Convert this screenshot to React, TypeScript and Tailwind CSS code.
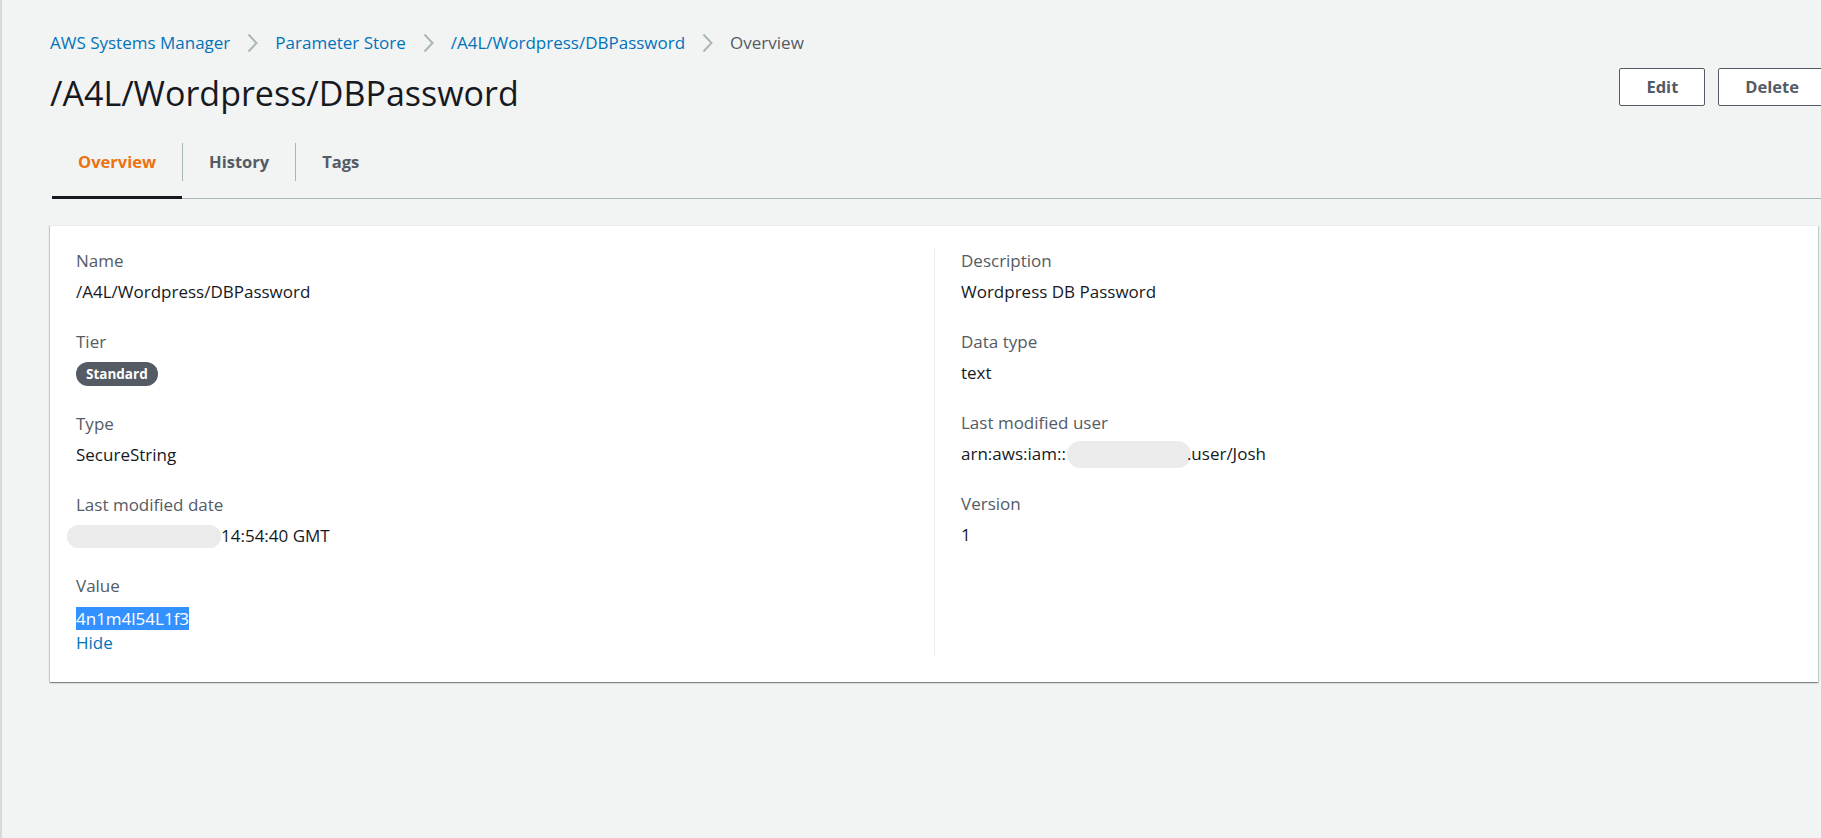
const fields = {
  left: [
    { label: "Name", value: "/A4L/Wordpress/DBPassword" },
    { label: "Tier", value: "badge" },
    { label: "Type", value: "SecureString" },
    { label: "Last modified date", value: "date" },
    { label: "Value", value: "secret" },
  ],
  right: [
    { label: "Description", value: "Wordpress DB Password" },
    { label: "Data type", value: "text" },
    { label: "Last modified user", value: "arn" },
    { label: "Version", value: "1" },
  ],
};

function Chevron() {
  return (
    <svg width="11" height="20" viewBox="0 0 11 20" className="mx-[17px] shrink-0">
      <polyline points="1.5,1.5 9.5,10 1.5,18.5" fill="none" stroke="#aab7b8" strokeWidth="2" />
    </svg>
  );
}

function Blob({ className }: { className: string }) {
  return <span className={"inline-block shrink-0 rounded-full bg-[#ebebeb] " + className} />;
}

function Value({ v }: { v: string }) {
  if (v === "badge") {
    return (
      <div className="mt-[7px] flex h-[25px] items-center">
        <span className="rounded-full bg-[#545b64] px-[10px] text-[13.5px] leading-[24px] font-bold text-white">
          Standard
        </span>
      </div>
    );
  }
  if (v === "date") {
    return (
      <div className="mt-[7px] flex h-[24px] items-center">
        <Blob className="-ml-[9px] h-[23px] w-[154px]" />
        <span>14:54:40 GMT</span>
      </div>
    );
  }
  if (v === "arn") {
    return (
      <div className="mt-[7px] flex h-[24px] items-center">
        <span>arn:aws:iam::</span>
        <Blob className="ml-[1px] -mr-[4px] h-[27px] w-[124px]" />
        <span>.user/Josh</span>
      </div>
    );
  }
  if (v === "secret") {
    return (
      <div className="mt-[8px] leading-[25px]">
        <span className="bg-[#3390ff] text-white">4n1m4l54L1f3</span>
        <div className="leading-[24px] text-[#0073bb]">Hide</div>
      </div>
    );
  }
  return <div className="mt-[7px] leading-[24px]">{v}</div>;
}

function Field({ label, value }: { label: string; value: string }) {
  return (
    <div>
      <div className="leading-[24px] text-[#545b64]">{label}</div>
      <Value v={value} />
    </div>
  );
}

export default function App() {
  return (
    <div className="min-h-[838px] w-[1821px] overflow-hidden border-l-2 border-[#d5dbdb] bg-[#f2f3f3] font-['Open_Sans',sans-serif] text-[17px] text-[#16191f]">
      <div className="pl-[48px] pr-[3px] pt-[31px]">
        <nav className="flex items-center leading-[24px]">
          <span className="text-[#0073bb]">AWS Systems Manager</span>
          <Chevron />
          <span className="text-[#0073bb]">Parameter Store</span>
          <Chevron />
          <span className="text-[#0073bb]">/A4L/Wordpress/DBPassword</span>
          <Chevron />
          <span className="text-[#545b64]">Overview</span>
        </nav>

        <div className="mt-[13px] flex items-start justify-between">
          <h1 className="mt-[5px] text-[34px] leading-[40px] text-[#16191f]">/A4L/Wordpress/DBPassword</h1>
          <div className="-mr-[8px] flex gap-[13px]">
            <button className="h-[38px] rounded-[2px] border border-[#545b64] bg-white px-[26px] text-[16.5px] font-bold text-[#545b64]">
              Edit
            </button>
            <button className="h-[38px] rounded-[2px] border border-[#545b64] bg-white px-[26px] text-[16.5px] font-bold text-[#545b64]">
              Delete
            </button>
          </div>
        </div>

        <div className="mt-[15px] -mr-[3px] ml-[2px] flex border-b border-[#aab7b8] pb-[17px] pt-[15px] text-[16.5px] font-bold leading-[24px]">
          <div className="relative">
            <div className="px-[26px] py-[7px] text-[#ec7211]">Overview</div>
            <span className="absolute -bottom-[18px] left-0 right-0 h-[3px] bg-[#16191f]" />
          </div>
          <div className="border-l border-[#aab7b8] px-[26px] py-[7px] text-[#545b64]">History</div>
          <div className="border-l border-[#aab7b8] px-[26px] py-[7px] text-[#545b64]">Tags</div>
        </div>

        <div className="mt-[26px] border-t border-[#eaeded] bg-white px-[26px] pb-[27px] pt-[23px] shadow-[0_1px_1px_0_rgba(0,28,36,0.3),1px_1px_1px_0_rgba(0,28,36,0.15),-1px_1px_1px_0_rgba(0,28,36,0.15)]">
          <div className="grid grid-cols-2">
            <div className="flex flex-col gap-[26px] pr-[26px]">
              {fields.left.map((f) => (
                <Field key={f.label} label={f.label} value={f.value} />
              ))}
            </div>
            <div className="flex flex-col gap-[26px] border-l border-[#eaeded] pl-[26px]">
              {fields.right.map((f) => (
                <Field key={f.label} label={f.label} value={f.value} />
              ))}
            </div>
          </div>
        </div>
      </div>
    </div>
  );
}
